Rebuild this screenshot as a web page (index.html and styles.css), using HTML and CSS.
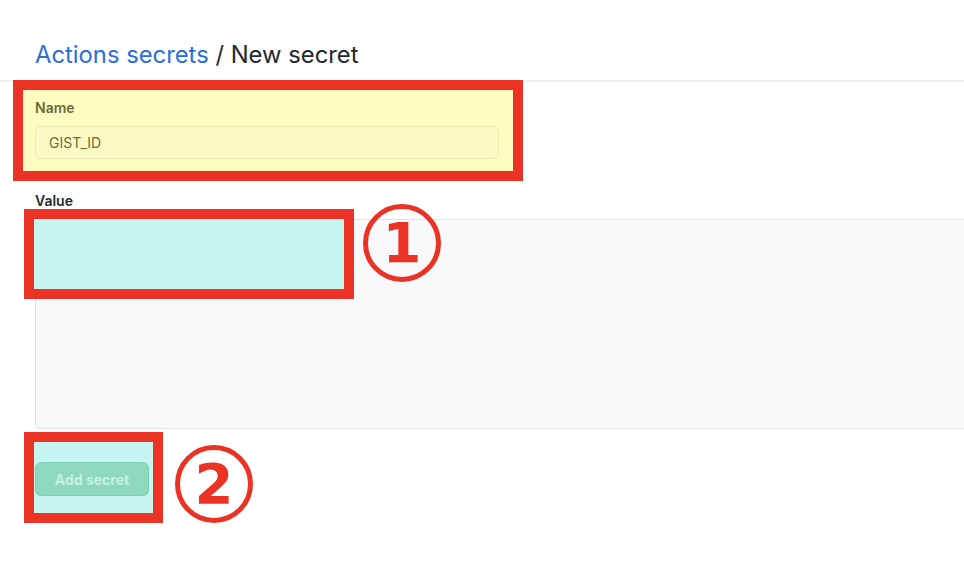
FILE: index.html
```html
<!DOCTYPE html>
<html lang="en">
<head>
    <meta charset="UTF-8">
    <meta name="viewport" content="width=device-width, initial-scale=1.0">
    <title>New secret</title>
    <link rel="stylesheet" href="styles.css">
</head>
<body>

    <div class="page">
        <h2 class="subhead">
            <a href="#" class="crumb">Actions secrets</a> / New secret
        </h2>

        <form class="secret-form">
            <div class="mark mark-yellow">
                <label class="field-label" for="name">Name</label>
                <input type="text" id="name" class="name-input" value="GIST_ID">
            </div>

            <label class="field-label value-label" for="value">Value</label>
            <div class="value-wrap">
                <textarea id="value" class="value-input"></textarea>
                <div class="mark-box mark-box-value"></div>
                <div class="step step-one">1</div>
            </div>

            <div class="submit-row">
                <div class="mark mark-cyan">
                    <button type="submit" class="btn-add" disabled>Add secret</button>
                </div>
                <div class="step step-two">2</div>
            </div>
        </form>
    </div>

</body>
</html>
```

FILE: styles.css
```css
*, *::after, *::before{
    margin: 0;
    padding: 0;
    box-sizing: border-box;
}
:root {
    --mark-red: #ea3325;
    --mark-yellow: #fefcc1;
    --mark-cyan: #c7f5f1;
    --text: #24292e;
    --link: #2a6fd8;
}

html, body{
    overflow: hidden;
}
body{
    background-color: #ffffff;
    font-family: Inter, "Liberation Sans", sans-serif;
    color: var(--text);
    height: 100vh;
}
.page{
    width: 100%;
    overflow: hidden;
}

/* header */
.subhead{
    padding: 40px 0 10px 35px;
    font-size: 23.8px;
    font-weight: 400;
    line-height: 30px;
    border-bottom: 2px solid #f0f0f0;
}
.crumb{
    color: var(--link);
    text-decoration: none;
}

/* annotation frames */
.mark{
    border: 10px solid var(--mark-red);
}
.mark-yellow{
    width: 510px;
    margin: -2px 0 0 13px;
    padding: 8px 14px 12px 12px;
    background-color: var(--mark-yellow);
}
.mark-cyan{
    margin-left: 24px;
    padding: 20px 4px 17px 1px;
    background-color: var(--mark-cyan);
}

/* form */
.field-label{
    display: block;
    font-size: 14px;
    font-weight: 600;
    line-height: 20px;
    margin-bottom: 8px;
}
.mark-yellow .field-label{
    color: #6c6a3a;
}
.name-input{
    display: block;
    width: 100%;
    height: 33px;
    padding: 0 13px;
    font-family: inherit;
    font-size: 14px;
    color: #6c6a3a;
    background-color: #fcfbc6;
    border: 1px solid #ebe9b2;
    border-radius: 6px;
    outline: none;
}
.value-label{
    margin: 10px 0 8px 35px;
}
.value-wrap{
    position: relative;
    margin-left: 35px;
}
.value-input{
    display: block;
    width: calc(100% + 20px);
    height: 210px;
    resize: none;
    background-color: #f8f9fa;
    border: 1px solid #dfe1e4;
    border-radius: 6px;
    outline: none;
}
.mark-box{
    position: absolute;
    border: 10px solid var(--mark-red);
    background-color: var(--mark-cyan);
}
.mark-box-value{
    top: -10px;
    left: -11px;
    width: 330px;
    height: 90px;
}

.submit-row{
    display: flex;
    align-items: flex-start;
    margin-top: 3px;
}
.btn-add{
    display: block;
    width: 114px;
    height: 34px;
    font-family: inherit;
    font-size: 14px;
    font-weight: 700;
    color: #c6f0e0;
    background-color: #8ed9bd;
    border: 1px solid #7fd0b1;
    border-radius: 6px;
}

/* numbered callouts */
.step{
    width: 78px;
    height: 78px;
    border: 5px solid var(--mark-red);
    border-radius: 50%;
    display: flex;
    align-items: center;
    justify-content: center;
    font-family: "DejaVu Sans", sans-serif;
    font-size: 56px;
    font-weight: 700;
    line-height: 1;
    color: var(--mark-red);
}
.step-one{
    position: absolute;
    top: -15px;
    left: 328px;
}
.step-two{
    margin: 13px 0 0 12px;
}
```
